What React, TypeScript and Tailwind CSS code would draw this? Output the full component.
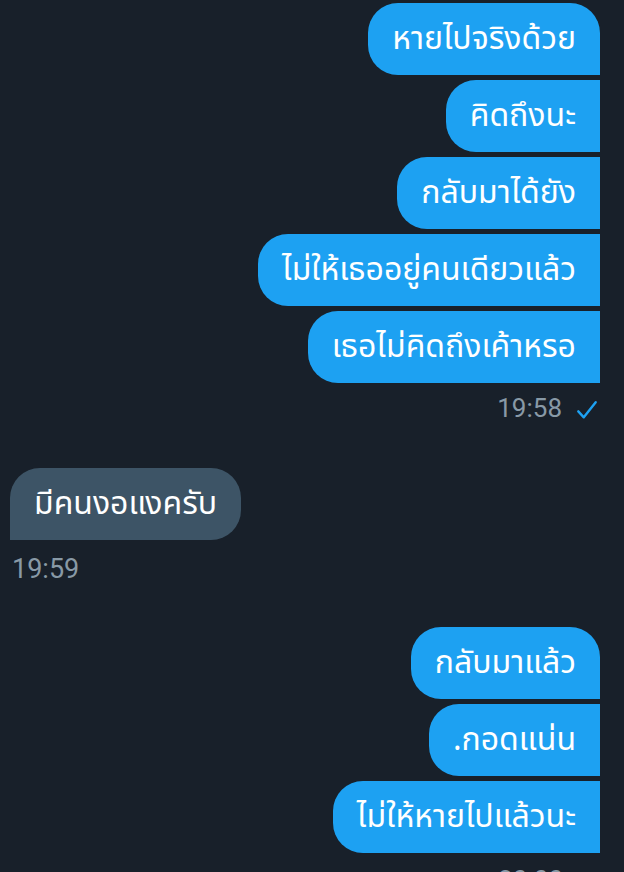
import React from "react";

const font = { fontFamily: '"Noto Sans Thai", "Noto Sans", "Tahoma", sans-serif' };

function Out({ text, pos }: { text: string; pos: "first" | "mid" | "last" }) {
  const r =
    pos === "first"
      ? "rounded-tl-[30px] rounded-tr-[30px] rounded-bl-[30px]"
      : "rounded-l-[30px]";
  return (
    <div className="flex justify-end">
      <div className={`h-[72px] flex items-center px-6 bg-[#1da1f2] text-white text-[32px] ${r}`}>
        {text}
      </div>
    </div>
  );
}

function Check() {
  return (
    <svg width="22" height="22" viewBox="0 0 24 24" className="ml-[14px] mt-1">
      <path d="M2.5 13.5 L8.5 20 L21.5 3.5" fill="none" stroke="#1da1f2" strokeWidth="2.6" strokeLinecap="round" strokeLinejoin="round" />
    </svg>
  );
}

export default function App() {
  return (
    <div className="w-[624px] h-[872px] overflow-hidden bg-[#18202a]" style={font}>
      <div className="pr-6 pl-[10px] pt-[3px] flex flex-col">
        <div className="flex flex-col gap-[5px]">
          <Out text="หายไปจริงด้วย" pos="first" />
          <Out text="คิดถึงนะ" pos="mid" />
          <Out text="กลับมาได้ยัง" pos="mid" />
          <Out text="ไม่ให้เธออยู่คนเดียวแล้ว" pos="mid" />
          <Out text="เธอไม่คิดถึงเค้าหรอ" pos="last" />
        </div>
        <div className="flex justify-end items-center mt-[10px] h-[30px] text-[#8899a6] text-[26px] pr-[2px]" style={{ fontFamily: "Roboto, sans-serif" }}>
          <span>19:58</span>
          <Check />
        </div>
        <div className="flex mt-[45px]">
          <div className="h-[72px] flex items-center px-6 bg-[#3d5466] text-white text-[32px] rounded-tl-[30px] rounded-tr-[30px] rounded-br-[30px]">
            มีคนงอแงครับ
          </div>
        </div>
        <div className="mt-[14px] h-[30px] flex items-center text-[#8899a6] text-[27px] pl-[2px]" style={{ fontFamily: "Roboto, sans-serif" }}>
          19:59
        </div>
        <div className="flex flex-col gap-[5px] mt-[43px]">
          <Out text="กลับมาแล้ว" pos="first" />
          <Out text=".กอดแน่น" pos="mid" />
          <Out text="ไม่ให้หายไปแล้วนะ" pos="last" />
        </div>
        <div className="flex justify-end items-center mt-[12px] h-[30px] text-[#8899a6] text-[26px] pr-[37px]" style={{ fontFamily: "Roboto, sans-serif" }}>
          <span>20:00</span>
        </div>
      </div>
    </div>
  );
}
